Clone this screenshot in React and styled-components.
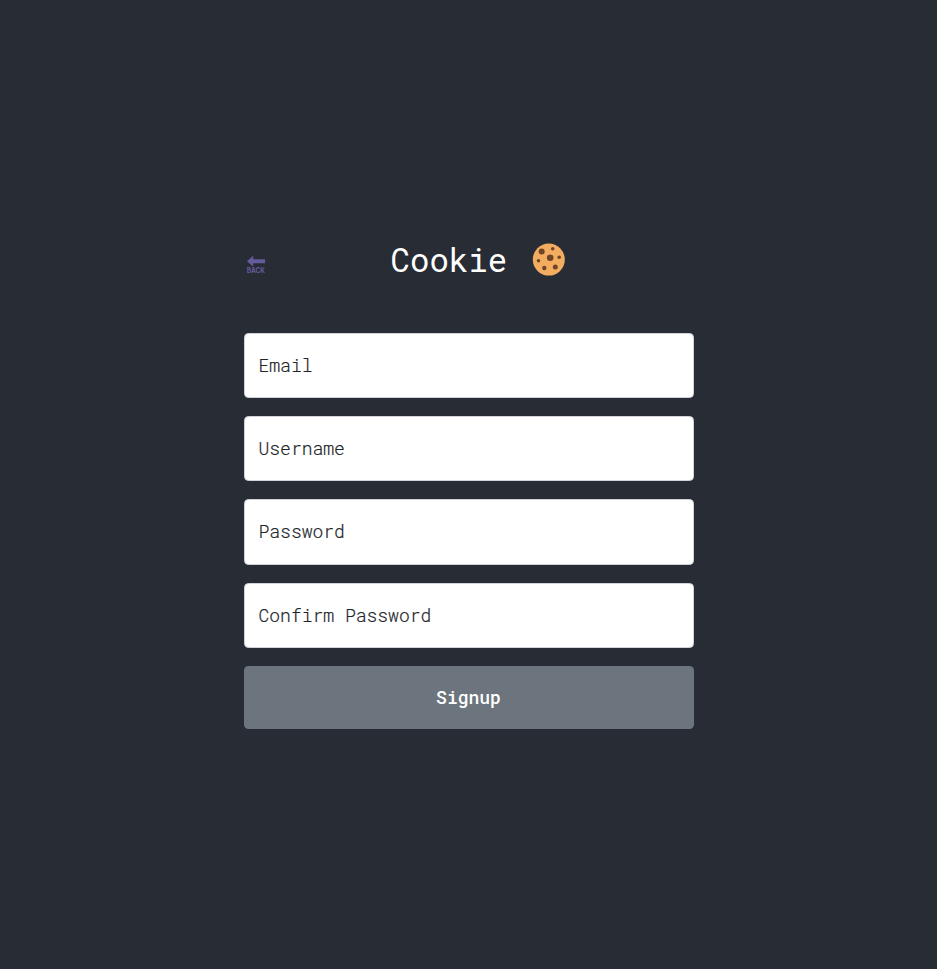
import React from "react";
import styled, { createGlobalStyle } from "styled-components";

const GlobalStyle = createGlobalStyle`
  *, *::before, *::after { box-sizing: border-box; }
  body {
    margin: 0;
    background: #282c34;
    font-family: "Roboto Mono", "Liberation Mono", monospace;
  }
`;

const Page = styled.main`
  min-height: 969px;
  padding: 236px 0 0 244px;
`;

const Form = styled.form`
  width: 450px;
  display: flex;
  flex-direction: column;
  gap: 18px;
`;

const Header = styled.header`
  height: 78.9px;
  display: grid;
  grid-template-columns: 146.6px auto 1fr;
  align-items: start;
`;

const BackLink = styled.a`
  margin: 19px 0 0 2px;
  line-height: 0;
`;

const BackLabel = styled.text`
  font: 700 7px "Inter", sans-serif;
`;

const Title = styled.h1`
  margin: 2px 0 0;
  color: #fff;
  font-size: 32.4px;
  font-weight: 400;
  line-height: 43px;
`;

const Cookie = styled.svg`
  margin: 7px 0 0 25.6px;
  overflow: visible;
`;

const Field = styled.input`
  width: 100%;
  height: 65.25px;
  padding: 0 13.5px 1.5px;
  border: 1px solid #ced4da;
  border-radius: 4.5px;
  background: #fff;
  color: #212529;
  font: 300 18px "Roboto Mono", "Liberation Mono", monospace;
  -webkit-text-stroke: 0.2px #212529;
  outline: none;
  &::placeholder { color: #212529; opacity: 1; }
`;

const SubmitButton = styled.button`
  height: 63px;
  padding: 0 1px 0 0;
  border: 0;
  border-radius: 4.5px;
  background: #6c757d;
  color: #fff;
  font: 500 18px "Roboto Mono", "Liberation Mono", monospace;
`;

const fields = [
  { label: "Email", type: "email" },
  { label: "Username", type: "text" },
  { label: "Password", type: "password" },
  { label: "Confirm Password", type: "password" },
];

const chips = [
  [9.2, 8.5, 3],
  [20.2, 5.8, 1.8],
  [17.7, 14.8, 3.3],
  [26.7, 14.2, 1.8],
  [6, 17.8, 1.8],
  [11.8, 25, 2.2],
  [22.8, 24, 2.5],
];

export default function App() {
  return (
    <>
      <GlobalStyle />
      <Page>
        <Form>
          <Header>
            <BackLink href="#">
              <svg width="20" height="20" viewBox="0 0 20 20" fill="#645b9d">
                <path d="M1 6.3 7.2 .8V4.3H19V8.3H7.2V11.8Z" />
                <BackLabel x="0.7" y="18.3" textLength="18.2" lengthAdjust="spacingAndGlyphs">
                  BACK
                </BackLabel>
              </svg>
            </BackLink>
            <Title>Cookie</Title>
            <Cookie width="34" height="34" viewBox="0.5 0 34 34">
              <circle cx="16.3" cy="16.6" r="16" fill="#f3ad61" />
              {chips.map(([x, y, r]) => (
                <circle key={`${x}-${y}`} cx={x} cy={y} r={r} fill="#6f4527" />
              ))}
            </Cookie>
          </Header>
          {fields.map(({ label, type }) => (
            <Field key={label} type={type} placeholder={label} aria-label={label} />
          ))}
          <SubmitButton type="button">Signup</SubmitButton>
        </Form>
      </Page>
    </>
  );
}
